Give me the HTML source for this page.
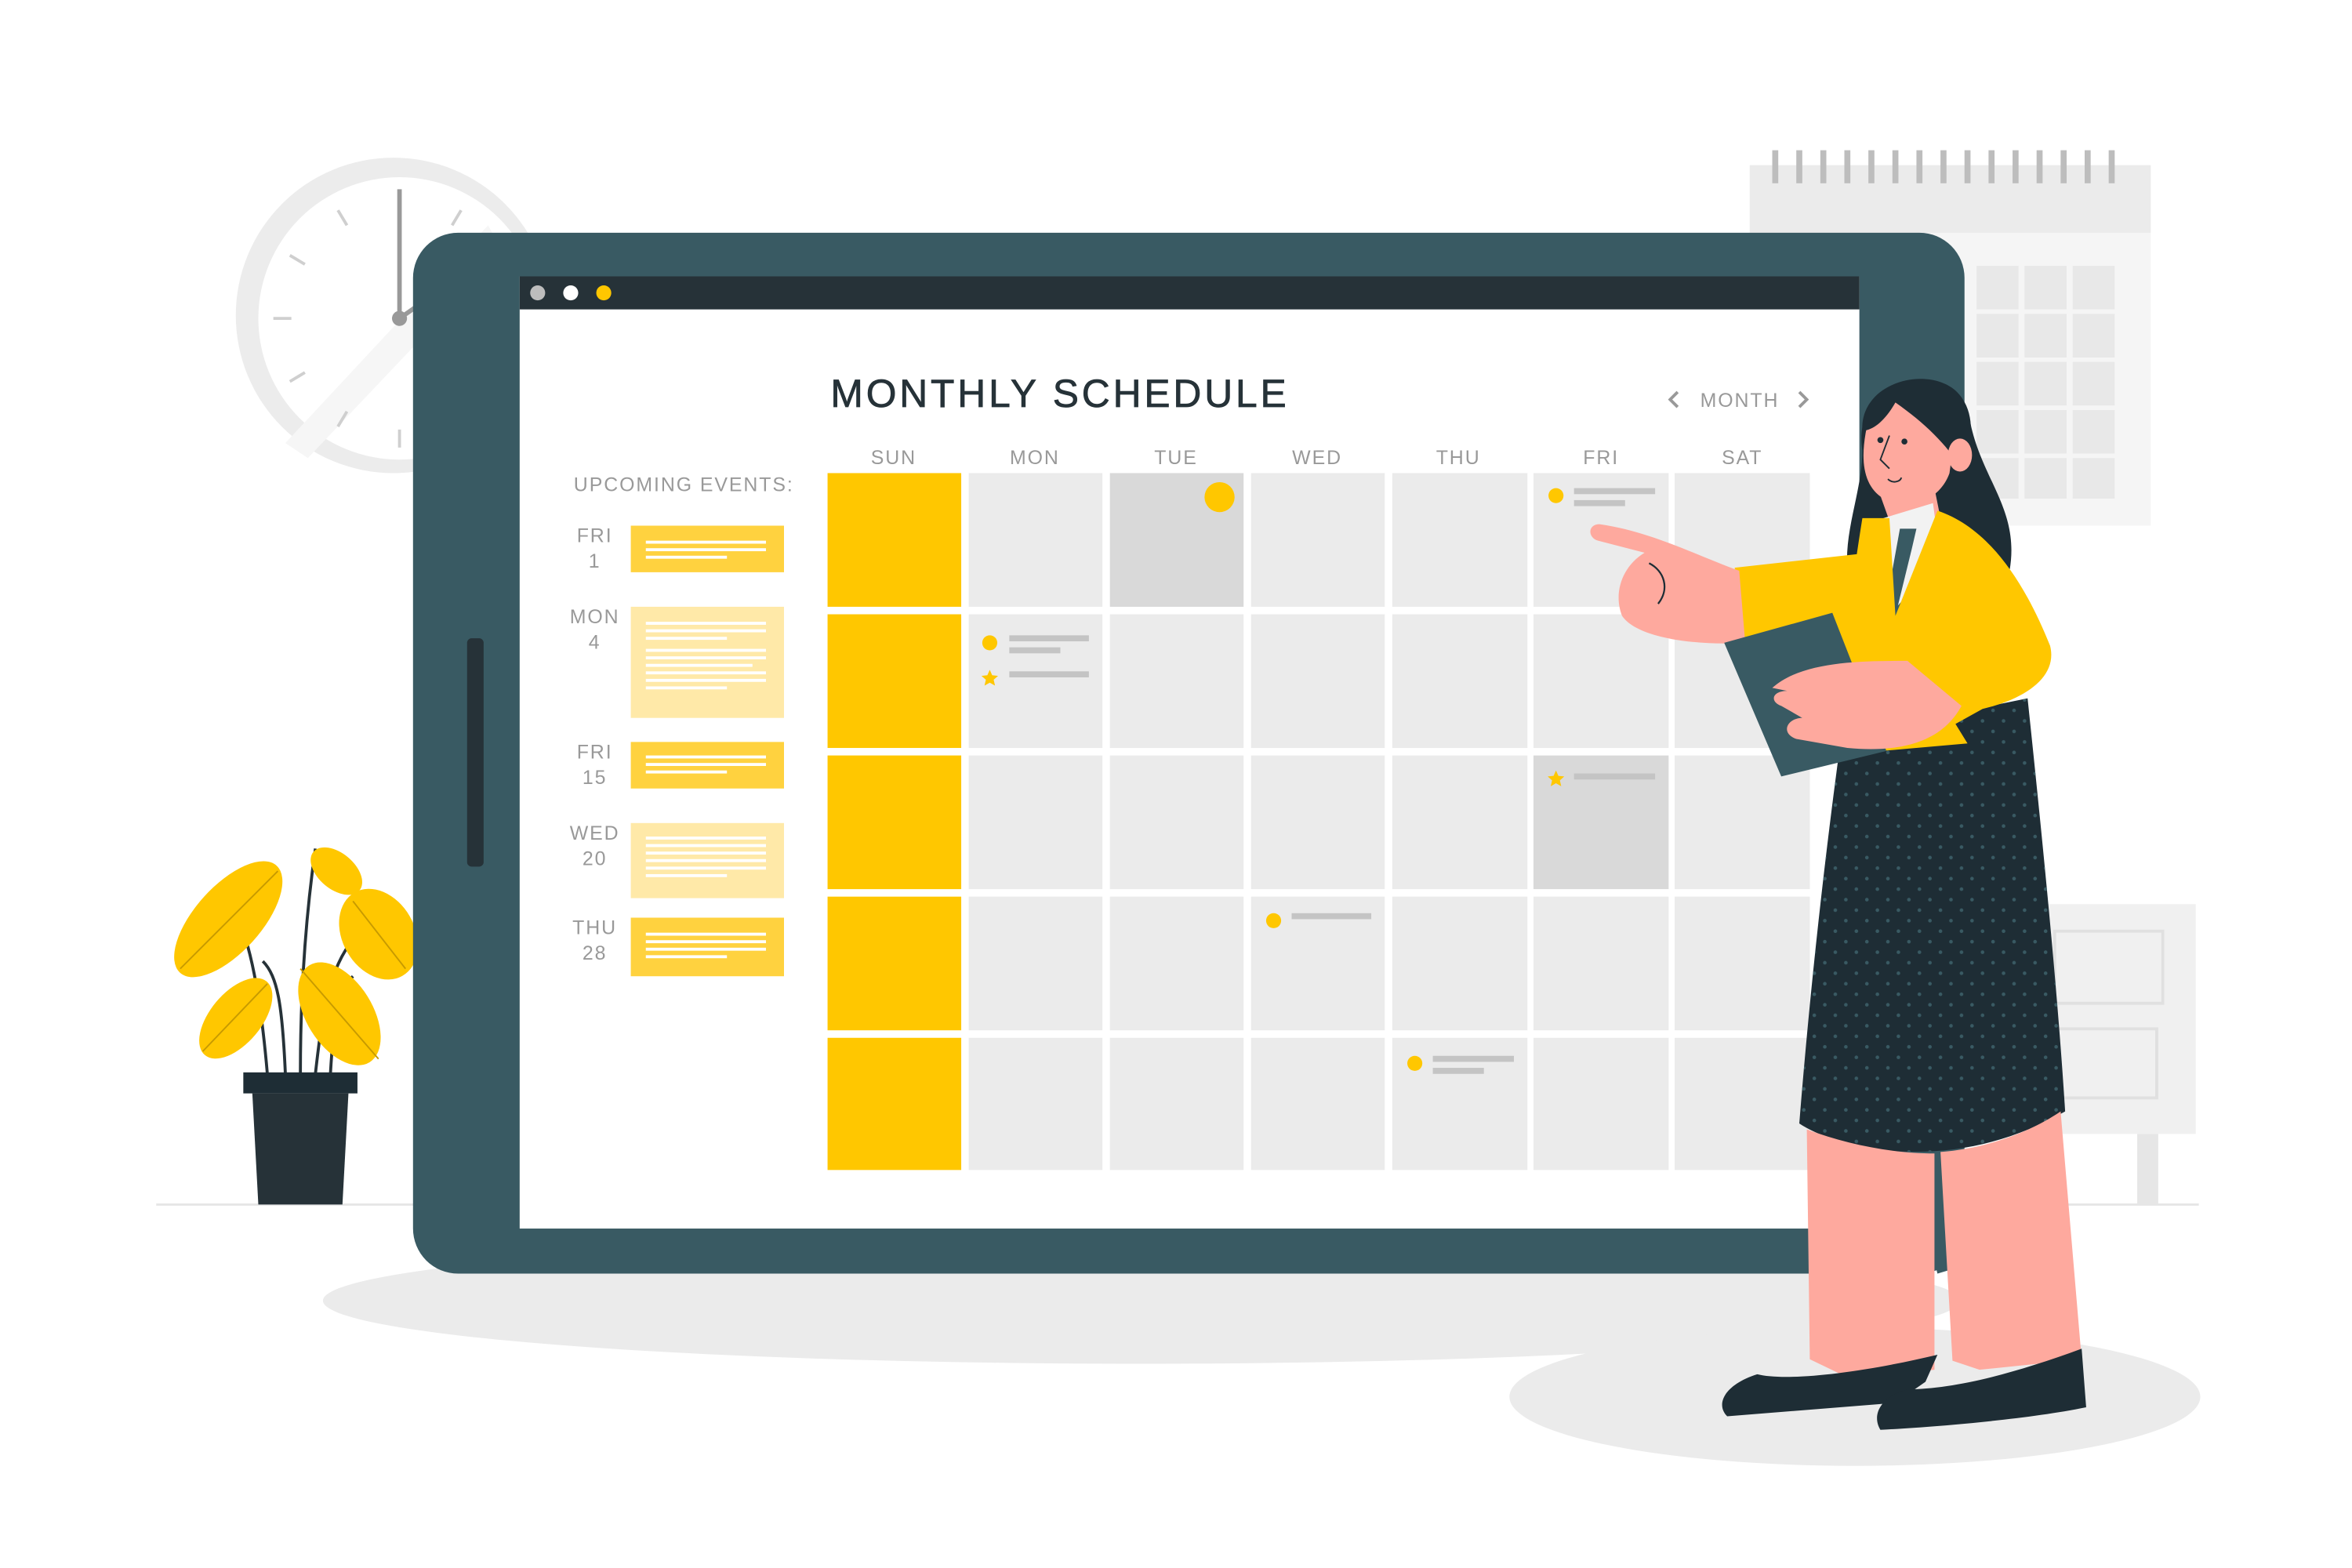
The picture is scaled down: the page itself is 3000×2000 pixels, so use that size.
<!DOCTYPE html>
<html><head><meta charset="utf-8"><style>
html,body{margin:0;padding:0;background:#fff;}
svg{display:block;}
text{font-family:"Liberation Sans",sans-serif;}
</style></head><body>
<svg width="3000" height="2000" viewBox="0 0 1566 1044" preserveAspectRatio="none" xmlns="http://www.w3.org/2000/svg">
<defs><pattern id="dots" width="14" height="14" patternUnits="userSpaceOnUse"><circle cx="4" cy="4" r="1.2" fill="#395a63"/><circle cx="11" cy="11" r="1.2" fill="#395a63"/></pattern></defs>
<rect width="1566" height="1044" fill="#fff"/>
<line x1="104" y1="802" x2="1464" y2="802" stroke="#e6e6e6" stroke-width="1.5"/>
<ellipse cx="760" cy="866" rx="545" ry="42" fill="#ebebeb"/>
<ellipse cx="1235" cy="930" rx="230" ry="46" fill="#ebebeb"/>
<!-- clock -->
<circle cx="262" cy="210" r="105" fill="#ececec"/>
<circle cx="266" cy="212" r="94" fill="#fff"/>
<path d="M190,295 L325,150 L335,168 L205,305Z" fill="#f6f6f6"/>
<g stroke="#cfcfcf" stroke-width="2">
<line x1="266" y1="128" x2="266" y2="140"/><line x1="182" y1="212" x2="194" y2="212"/>
<line x1="266" y1="286" x2="266" y2="298"/><line x1="225" y1="140" x2="231" y2="150"/>
<line x1="193" y1="170" x2="203" y2="176"/><line x1="193" y1="254" x2="203" y2="248"/>
<line x1="225" y1="284" x2="231" y2="274"/><line x1="307" y1="140" x2="301" y2="150"/>
</g>
<line x1="266" y1="212" x2="266" y2="126" stroke="#999" stroke-width="3"/>
<line x1="266" y1="212" x2="276" y2="205" stroke="#999" stroke-width="3"/>
<circle cx="266" cy="212" r="5" fill="#999"/>
<!-- background calendar -->
<g>
<rect x="1165" y="110" width="267" height="240" fill="#f5f5f5"/>
<rect x="1165" y="110" width="267" height="45" fill="#ebebeb"/>
<g stroke="#bdbdbd" stroke-width="4">
<line x1="1182" y1="100" x2="1182" y2="122"/><line x1="1198" y1="100" x2="1198" y2="122"/><line x1="1214" y1="100" x2="1214" y2="122"/><line x1="1230" y1="100" x2="1230" y2="122"/><line x1="1246" y1="100" x2="1246" y2="122"/><line x1="1262" y1="100" x2="1262" y2="122"/><line x1="1278" y1="100" x2="1278" y2="122"/><line x1="1294" y1="100" x2="1294" y2="122"/><line x1="1310" y1="100" x2="1310" y2="122"/><line x1="1326" y1="100" x2="1326" y2="122"/><line x1="1342" y1="100" x2="1342" y2="122"/><line x1="1358" y1="100" x2="1358" y2="122"/><line x1="1374" y1="100" x2="1374" y2="122"/><line x1="1390" y1="100" x2="1390" y2="122"/><line x1="1406" y1="100" x2="1406" y2="122"/>
</g>
<g fill="#e8e8e8">
<rect x="1316" y="177" width="28" height="29"/><rect x="1348" y="177" width="28" height="29"/><rect x="1380" y="177" width="28" height="29"/>
<rect x="1316" y="209" width="28" height="29"/><rect x="1348" y="209" width="28" height="29"/><rect x="1380" y="209" width="28" height="29"/>
<rect x="1316" y="241" width="28" height="29"/><rect x="1348" y="241" width="28" height="29"/><rect x="1380" y="241" width="28" height="29"/>
<rect x="1316" y="273" width="28" height="29"/><rect x="1348" y="273" width="28" height="29"/><rect x="1380" y="273" width="28" height="29"/>
<rect x="1316" y="305" width="28" height="27"/><rect x="1348" y="305" width="28" height="27"/><rect x="1380" y="305" width="28" height="27"/>
</g>
</g>
<rect x="1360" y="602" width="102" height="153" fill="#f0f0f0"/>
<rect x="1368" y="620" width="72" height="48" fill="none" stroke="#e0e0e0" stroke-width="2"/>
<rect x="1368" y="685" width="68" height="46" fill="none" stroke="#e0e0e0" stroke-width="2"/>
<rect x="1423" y="755" width="14" height="47" fill="#e6e6e6"/>
<!-- plant -->
<g fill="none" stroke="#263238" stroke-width="2">
<path d="M178,715 C175,680 170,640 160,615"/><path d="M190,715 C188,670 185,650 175,640"/>
<path d="M200,715 C200,650 205,600 210,565"/><path d="M210,715 C215,670 220,640 240,620"/>
<path d="M220,715 C222,680 225,660 235,650"/>
</g>
<g fill="#FFC700">
<ellipse cx="152" cy="612" rx="48" ry="22" transform="rotate(-48 152 612)"/>
<ellipse cx="157" cy="678" rx="32" ry="17" transform="rotate(-50 157 678)"/>
<ellipse cx="226" cy="675" rx="38" ry="22" transform="rotate(58 226 675)"/>
<ellipse cx="252" cy="622" rx="24" ry="32" transform="rotate(-30 252 622)"/>
<ellipse cx="224" cy="580" rx="20" ry="12" transform="rotate(40 224 580)"/>
</g>
<g stroke="#c79a00" stroke-width="1">
<line x1="120" y1="645" x2="185" y2="580"/><line x1="135" y1="700" x2="178" y2="655"/>
<line x1="200" y1="645" x2="252" y2="705"/><line x1="235" y1="600" x2="270" y2="645"/>
</g>
<rect x="162" y="714" width="76" height="14" fill="#1e2d35"/>
<path d="M168,728 L232,728 L228,802 L172,802Z" fill="#263238"/>
<!-- tablet -->
<rect x="275" y="155" width="1033" height="693" rx="30" fill="#395a63"/>
<rect x="311" y="425" width="11" height="152" rx="3" fill="#263238"/>
<rect x="346" y="184" width="892" height="634" fill="#fff"/>
<rect x="346" y="184" width="892" height="22" fill="#263238"/>
<circle cx="358" cy="195" r="5" fill="#bdbdbd"/><circle cx="380" cy="195" r="5" fill="#fff"/><circle cx="402" cy="195" r="5" fill="#FFC700"/>
<text x="553" y="271" font-size="26" fill="#263238" letter-spacing="2" stroke="#263238" stroke-width="0.4">MONTHLY SCHEDULE</text>
<g fill="none" stroke="#999" stroke-width="2"><path d="M1117,261 L1112,266 L1117,271"/><path d="M1198,261 L1203,266 L1198,271"/></g>
<text x="1132" y="271" font-size="13" fill="#999" letter-spacing="1">MONTH</text>
<g font-size="13" fill="#999" text-anchor="middle" letter-spacing="1">
<text x="595" y="309">SUN</text><text x="689" y="309">MON</text><text x="783" y="309">TUE</text><text x="877" y="309">WED</text><text x="971" y="309">THU</text><text x="1066" y="309">FRI</text><text x="1160" y="309">SAT</text>
</g>
<g fill="#ebebeb">
<rect x="645" y="315" width="89" height="89"/><rect x="833" y="315" width="89" height="89"/><rect x="927" y="315" width="90" height="89"/><rect x="1021" y="315" width="90" height="89"/><rect x="1115" y="315" width="90" height="89"/>
<rect x="645" y="409" width="89" height="89"/><rect x="739" y="409" width="89" height="89"/><rect x="833" y="409" width="89" height="89"/><rect x="927" y="409" width="90" height="89"/><rect x="1021" y="409" width="90" height="89"/><rect x="1115" y="409" width="90" height="89"/>
<rect x="645" y="503" width="89" height="89"/><rect x="739" y="503" width="89" height="89"/><rect x="833" y="503" width="89" height="89"/><rect x="927" y="503" width="90" height="89"/><rect x="1115" y="503" width="90" height="89"/>
<rect x="645" y="597" width="89" height="89"/><rect x="739" y="597" width="89" height="89"/><rect x="833" y="597" width="89" height="89"/><rect x="927" y="597" width="90" height="89"/><rect x="1021" y="597" width="90" height="89"/><rect x="1115" y="597" width="90" height="89"/>
<rect x="645" y="691" width="89" height="88"/><rect x="739" y="691" width="89" height="88"/><rect x="833" y="691" width="89" height="88"/><rect x="927" y="691" width="90" height="88"/><rect x="1021" y="691" width="90" height="88"/><rect x="1115" y="691" width="90" height="88"/>
</g>
<rect x="739" y="315" width="89" height="89" fill="#d9d9d9"/>
<rect x="1021" y="503" width="90" height="89" fill="#d9d9d9"/>
<g fill="#FFC700">
<rect x="551" y="315" width="89" height="89"/><rect x="551" y="409" width="89" height="89"/><rect x="551" y="503" width="89" height="89"/><rect x="551" y="597" width="89" height="89"/><rect x="551" y="691" width="89" height="88"/>
<circle cx="812" cy="331" r="10"/><circle cx="1036" cy="330" r="5"/><circle cx="659" cy="428" r="5"/>
<circle cx="848" cy="613" r="5"/><circle cx="942" cy="708" r="5"/>
<path d="M659,446 l1.6,3.6 3.9,.4 -2.9,2.6 .9,3.9 -3.5,-2 -3.5,2 .9,-3.9 -2.9,-2.6 3.9,-.4Z"/>
<path d="M1036,513 l1.6,3.6 3.9,.4 -2.9,2.6 .9,3.9 -3.5,-2 -3.5,2 .9,-3.9 -2.9,-2.6 3.9,-.4Z"/>
</g>
<g fill="#c4c4c4">
<rect x="1048" y="325" width="54" height="4"/><rect x="1048" y="333" width="34" height="4"/>
<rect x="672" y="423" width="53" height="4"/><rect x="672" y="431" width="34" height="4"/>
<rect x="672" y="447" width="53" height="4"/><rect x="1048" y="515" width="54" height="4"/>
<rect x="860" y="608" width="53" height="4"/><rect x="954" y="703" width="54" height="4"/><rect x="954" y="711" width="34" height="4"/>
</g>
<text x="382" y="327" font-size="13" fill="#999" letter-spacing="1">UPCOMING EVENTS:</text>
<g font-size="13" fill="#999" text-anchor="middle" letter-spacing="1">
<text x="396" y="361">FRI</text><text x="396" y="378">1</text>
<text x="396" y="415">MON</text><text x="396" y="432">4</text>
<text x="396" y="505">FRI</text><text x="396" y="522">15</text>
<text x="396" y="559">WED</text><text x="396" y="576">20</text>
<text x="396" y="622">THU</text><text x="396" y="639">28</text>
</g>
<rect x="420" y="350" width="102" height="31" fill="#FFD23F"/>
<rect x="420" y="404" width="102" height="74" fill="#FFE9A8"/>
<rect x="420" y="494" width="102" height="31" fill="#FFD23F"/>
<rect x="420" y="548" width="102" height="50" fill="#FFE9A8"/>
<rect x="420" y="611" width="102" height="39" fill="#FFD23F"/>
<g fill="#fff">
<rect x="430" y="360" width="80" height="2"/><rect x="430" y="365" width="80" height="2"/><rect x="430" y="370" width="54" height="2"/>
<rect x="430" y="414" width="80" height="2"/><rect x="430" y="419" width="80" height="2"/><rect x="430" y="424" width="54" height="2"/>
<rect x="430" y="432" width="80" height="2"/><rect x="430" y="437" width="80" height="2"/><rect x="430" y="442" width="71" height="2"/><rect x="430" y="447" width="80" height="2"/><rect x="430" y="452" width="80" height="2"/><rect x="430" y="457" width="54" height="2"/>
<rect x="430" y="503" width="80" height="2"/><rect x="430" y="508" width="80" height="2"/><rect x="430" y="513" width="54" height="2"/>
<rect x="430" y="557" width="80" height="2"/><rect x="430" y="562" width="80" height="2"/><rect x="430" y="567" width="80" height="2"/><rect x="430" y="572" width="80" height="2"/><rect x="430" y="577" width="80" height="2"/><rect x="430" y="582" width="54" height="2"/>
<rect x="430" y="621" width="80" height="2"/><rect x="430" y="626" width="80" height="2"/><rect x="430" y="631" width="80" height="2"/><rect x="430" y="636" width="54" height="2"/>
</g>
<!-- woman -->
<path d="M1240,300 C1232,250 1300,235 1312,282 C1320,320 1345,340 1338,380 L1232,392 C1224,360 1240,330 1240,300Z" fill="#1e2d35"/>
<path d="M1246,272 C1238,300 1238,322 1254,332 C1272,342 1292,332 1298,315 L1302,285 C1290,262 1258,258 1246,272Z" fill="#FEA99E"/>
<path d="M1240,287 C1238,255 1282,243 1302,260 C1318,275 1312,300 1306,312 C1296,296 1282,282 1262,268 C1255,280 1248,286 1240,287Z" fill="#1e2d35"/>
<ellipse cx="1305" cy="303" rx="8" ry="11" fill="#FEA99E"/>
<circle cx="1252" cy="293" r="2" fill="#1e2d35"/><circle cx="1268" cy="294" r="2" fill="#1e2d35"/>
<path d="M1258,290 L1252,306 L1258,312" fill="none" stroke="#1e2d35" stroke-width="1"/>
<path d="M1257,319 C1260,322 1265,321 1266,318" fill="none" stroke="#1e2d35" stroke-width="1"/>
<path d="M1252,330 L1288,325 L1292,345 L1262,358Z" fill="#FEA99E"/>
<path d="M1254,345 L1287,335 L1292,372 L1262,405 L1255,380Z" fill="#f2f2f2"/>
<path d="M1265,352 L1276,352 L1273,365 L1262,410 L1257,396Z" fill="#395a63"/>
<path d="M1226,490 L1350,465 C1360,560 1370,660 1375,740 C1340,760 1300,770 1256,766 C1230,763 1210,756 1198,748 C1205,660 1215,570 1226,490Z" fill="#1e2d35"/>
<path d="M1226,490 L1350,465 C1360,560 1370,660 1375,740 C1340,760 1300,770 1256,766 C1230,763 1210,756 1198,748 C1205,660 1215,570 1226,490Z" fill="url(#dots)"/>
<path d="M1240,345 L1258,345 L1262,410 L1290,340 C1320,350 1345,380 1365,430 C1370,450 1350,465 1320,472 L1302,482 L1310,495 L1230,502 C1225,460 1228,420 1240,345Z" fill="#FFC700"/>
<path d="M1245,368 L1240,440 L1160,426 L1155,378Z" fill="#FFC700"/>
<path d="M1158,380 C1130,370 1100,354 1065,349 C1057,349 1057,358 1064,360 L1095,368 C1080,377 1074,395 1080,410 C1090,425 1130,430 1162,428Z" fill="#FEA99E"/>
<path d="M1098,375 C1108,380 1112,392 1104,402" fill="none" stroke="#1e2d35" stroke-width="1.2"/>
<path d="M1148,428 L1220,408 L1256,500 L1186,517Z" fill="#395a63"/>
<path d="M1180,458 C1200,440 1240,440 1270,440 L1306,470 C1292,496 1262,501 1230,498 L1196,492 C1185,488 1190,478 1200,478 L1186,470 C1178,467 1180,460 1190,460Z" fill="#FEA99E"/>
<path d="M1270,768 L1290,768 L1300,845 L1290,848Z" fill="#395a63"/>
<path d="M1203,752 C1230,762 1260,768 1288,768 L1288,912 L1232,918 L1205,905Z" fill="#FEA99E"/>
<path d="M1292,767 C1320,765 1350,755 1372,740 L1386,905 L1318,912 L1300,906Z" fill="#FEA99E"/>
<path d="M1170,915 C1190,920 1240,914 1290,902 L1282,920 L1262,934 L1150,943 C1142,935 1148,922 1170,915Z" fill="#1e2d35"/>
<path d="M1386,898 L1389,937 C1350,945 1290,950 1252,952 C1246,942 1252,930 1270,925 C1300,925 1340,915 1386,898Z" fill="#1e2d35"/>
</svg>
</body></html>
